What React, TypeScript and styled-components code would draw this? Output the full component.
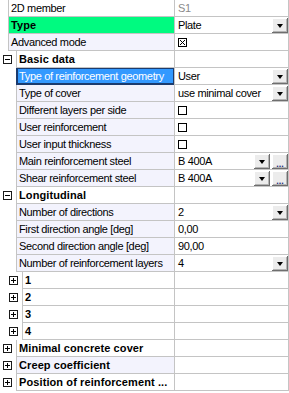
import React, { FC } from 'react';
import styled, { createGlobalStyle, css } from 'styled-components';

const GlobalStyle = createGlobalStyle`
  body {
    margin: 0;
    background: #ffffff;
    font-family: 'Liberation Sans', Arial, sans-serif;
    font-size: 11px;
    color: #000000;
  }
`;

type Tone = 'plain' | 'prop' | 'green' | 'selected';
type Editor = 'none' | 'text' | 'select' | 'selectMore' | 'check' | 'checked';

interface RowData {
  label: string;
  value?: string;
  indent: number;
  box?: 'plus' | 'minus';
  bold?: boolean;
  tone?: Tone;
  editor?: Editor;
  muted?: boolean;
}

const rows: RowData[] = [
  { label: '2D member', value: 'S1', indent: 8, tone: 'plain', editor: 'text', muted: true },
  { label: 'Type', value: 'Plate', indent: 8, bold: true, tone: 'green', editor: 'select' },
  { label: 'Advanced mode', indent: 8, tone: 'prop', editor: 'checked' },
  { label: 'Basic data', indent: 16, box: 'minus', bold: true },
  { label: 'Type of reinforcement geometry', value: 'User', indent: 16, tone: 'selected', editor: 'select' },
  { label: 'Type of cover', value: 'use minimal cover', indent: 16, tone: 'prop', editor: 'select' },
  { label: 'Different layers per side', indent: 16, tone: 'prop', editor: 'check' },
  { label: 'User reinforcement', indent: 16, tone: 'prop', editor: 'check' },
  { label: 'User input thickness', indent: 16, tone: 'prop', editor: 'check' },
  { label: 'Main reinforcement steel', value: 'B 400A', indent: 16, tone: 'prop', editor: 'selectMore' },
  { label: 'Shear reinforcement steel', value: 'B 400A', indent: 16, tone: 'prop', editor: 'selectMore' },
  { label: 'Longitudinal', indent: 16, box: 'minus', bold: true },
  { label: 'Number of directions', value: '2', indent: 16, tone: 'prop', editor: 'select' },
  { label: 'First direction angle [deg]', value: '0,00', indent: 16, tone: 'prop', editor: 'text' },
  { label: 'Second direction angle [deg]', value: '90,00', indent: 16, tone: 'prop', editor: 'text' },
  { label: 'Number of reinforcement layers', value: '4', indent: 16, tone: 'prop', editor: 'select' },
  { label: '1', indent: 22, box: 'plus', bold: true },
  { label: '2', indent: 22, box: 'plus', bold: true },
  { label: '3', indent: 22, box: 'plus', bold: true },
  { label: '4', indent: 22, box: 'plus', bold: true },
  { label: 'Minimal concrete cover', indent: 16, box: 'plus', bold: true },
  { label: 'Creep coefficient', indent: 16, box: 'plus', bold: true, tone: 'prop' },
  { label: 'Position of reinforcement ...', indent: 16, box: 'plus', bold: true },
];

const Grid = styled.div`
  width: 289px;
  display: flex;
  flex-direction: column;
`;

const Row = styled.div`
  display: flex;
  height: 17px;
`;

const Gutter = styled.div<{ $w: number }>`
  width: ${(p) => p.$w}px;
  flex: none;
  display: flex;
  align-items: center;
  justify-content: flex-end;
  padding-right: 4px;
  padding-bottom: 1px;
  box-sizing: border-box;
`;

const ExpandBox = styled.span`
  position: relative;
  width: 9px;
  height: 9px;
  box-sizing: border-box;
  border: 1px solid #1a1a1a;
  background: #ffffff;

  &::before {
    content: '';
    position: absolute;
    left: 1px;
    top: 3px;
    width: 5px;
    height: 1px;
    background: #000000;
  }
`;

const PlusBox = styled(ExpandBox)`
  &::after {
    content: '';
    position: absolute;
    left: 3px;
    top: 1px;
    width: 1px;
    height: 5px;
    background: #000000;
  }
`;

const toneBg: Record<Tone, string> = {
  plain: '#ffffff',
  prop: '#f3f3fd',
  green: '#00fa80',
  selected: '#3399ff',
};

const LabelCell = styled.div<{ $tone: Tone; $bold: boolean }>`
  flex: 1;
  min-width: 0;
  display: flex;
  align-items: center;
  padding-left: 2px;
  box-sizing: border-box;
  border-left: 1px solid #c4c4c4;
  border-bottom: 1px solid #c4c4c4;
  background: ${(p) => toneBg[p.$tone]};
  white-space: nowrap;
  overflow: hidden;
  letter-spacing: ${(p) => (p.$bold ? '0.1px' : '-0.35px')};
  font-weight: ${(p) => (p.$bold ? 700 : 400)};
  ${(p) =>
    p.$tone === 'selected' &&
    css`
      color: #ffffff;
      box-shadow: inset 0 0 0 1px #1b3b6e;
      border-bottom-color: #1b3b6e;
      border-left-color: #1b3b6e;
    `}
`;

const ValueCell = styled.div`
  width: 115px;
  flex: none;
  display: flex;
  align-items: center;
  gap: 2px;
  padding: 0 0 0 3px;
  box-sizing: border-box;
  border-left: 1px solid #c4c4c4;
  border-right: 1px solid #c4c4c4;
  border-bottom: 1px solid #c4c4c4;
  background: #ffffff;
  white-space: nowrap;
  letter-spacing: -0.35px;
`;

const ValueText = styled.span<{ $muted?: boolean }>`
  flex: 1;
  color: ${(p) => (p.$muted ? '#8a8a8a' : '#000000')};
`;

const EditButton = styled.span`
  width: 16px;
  height: 15px;
  flex: none;
  display: flex;
  align-items: center;
  justify-content: center;
  box-sizing: border-box;
  background: #ececec;
  box-shadow: inset -1px -1px 0 #6e6e6e, inset 1px 1px 0 #ffffff, inset -2px -2px 0 #b4b4b4;
`;

const Arrow = styled.span`
  width: 0;
  height: 0;
  margin-top: 1px;
  border-left: 3.5px solid transparent;
  border-right: 3.5px solid transparent;
  border-top: 4px solid #000000;
`;

const Dots = styled(EditButton)`
  align-items: flex-end;
  font-size: 9px;
  font-weight: 700;
  line-height: 10px;
  color: #1c2a7a;
  letter-spacing: 0;
`;

const Check = styled.span`
  width: 9px;
  height: 9px;
  box-sizing: border-box;
  border: 1px solid #000000;
  background: #ffffff;
  display: flex;
`;

const CheckMark: FC = () => (
  <svg width="7" height="7" viewBox="0 0 7 7">
    <path d="M1 1 L6 6 M6 1 L1 6" stroke="#000" strokeWidth="1" fill="none" shapeRendering="crispEdges" />
  </svg>
);

const Value: FC<{ row: RowData }> = ({ row }) => {
  switch (row.editor) {
    case 'check':
      return <Check />;
    case 'checked':
      return (
        <Check>
          <CheckMark />
        </Check>
      );
    case 'select':
      return (
        <>
          <ValueText>{row.value}</ValueText>
          <EditButton>
            <Arrow />
          </EditButton>
        </>
      );
    case 'selectMore':
      return (
        <>
          <ValueText>{row.value}</ValueText>
          <EditButton>
            <Arrow />
          </EditButton>
          <Dots>...</Dots>
        </>
      );
    case 'text':
      return <ValueText $muted={row.muted}>{row.value}</ValueText>;
    default:
      return null;
  }
};

export default function App() {
  return (
    <>
      <GlobalStyle />
      <Grid>
        {rows.map((row, i) => (
          <Row key={i}>
            <Gutter $w={row.indent}>
              {row.box === 'minus' && <ExpandBox />}
              {row.box === 'plus' && <PlusBox />}
            </Gutter>
            <LabelCell $tone={row.tone ?? 'plain'} $bold={!!row.bold}>
              {row.label}
            </LabelCell>
            <ValueCell>
              <Value row={row} />
            </ValueCell>
          </Row>
        ))}
      </Grid>
    </>
  );
}
